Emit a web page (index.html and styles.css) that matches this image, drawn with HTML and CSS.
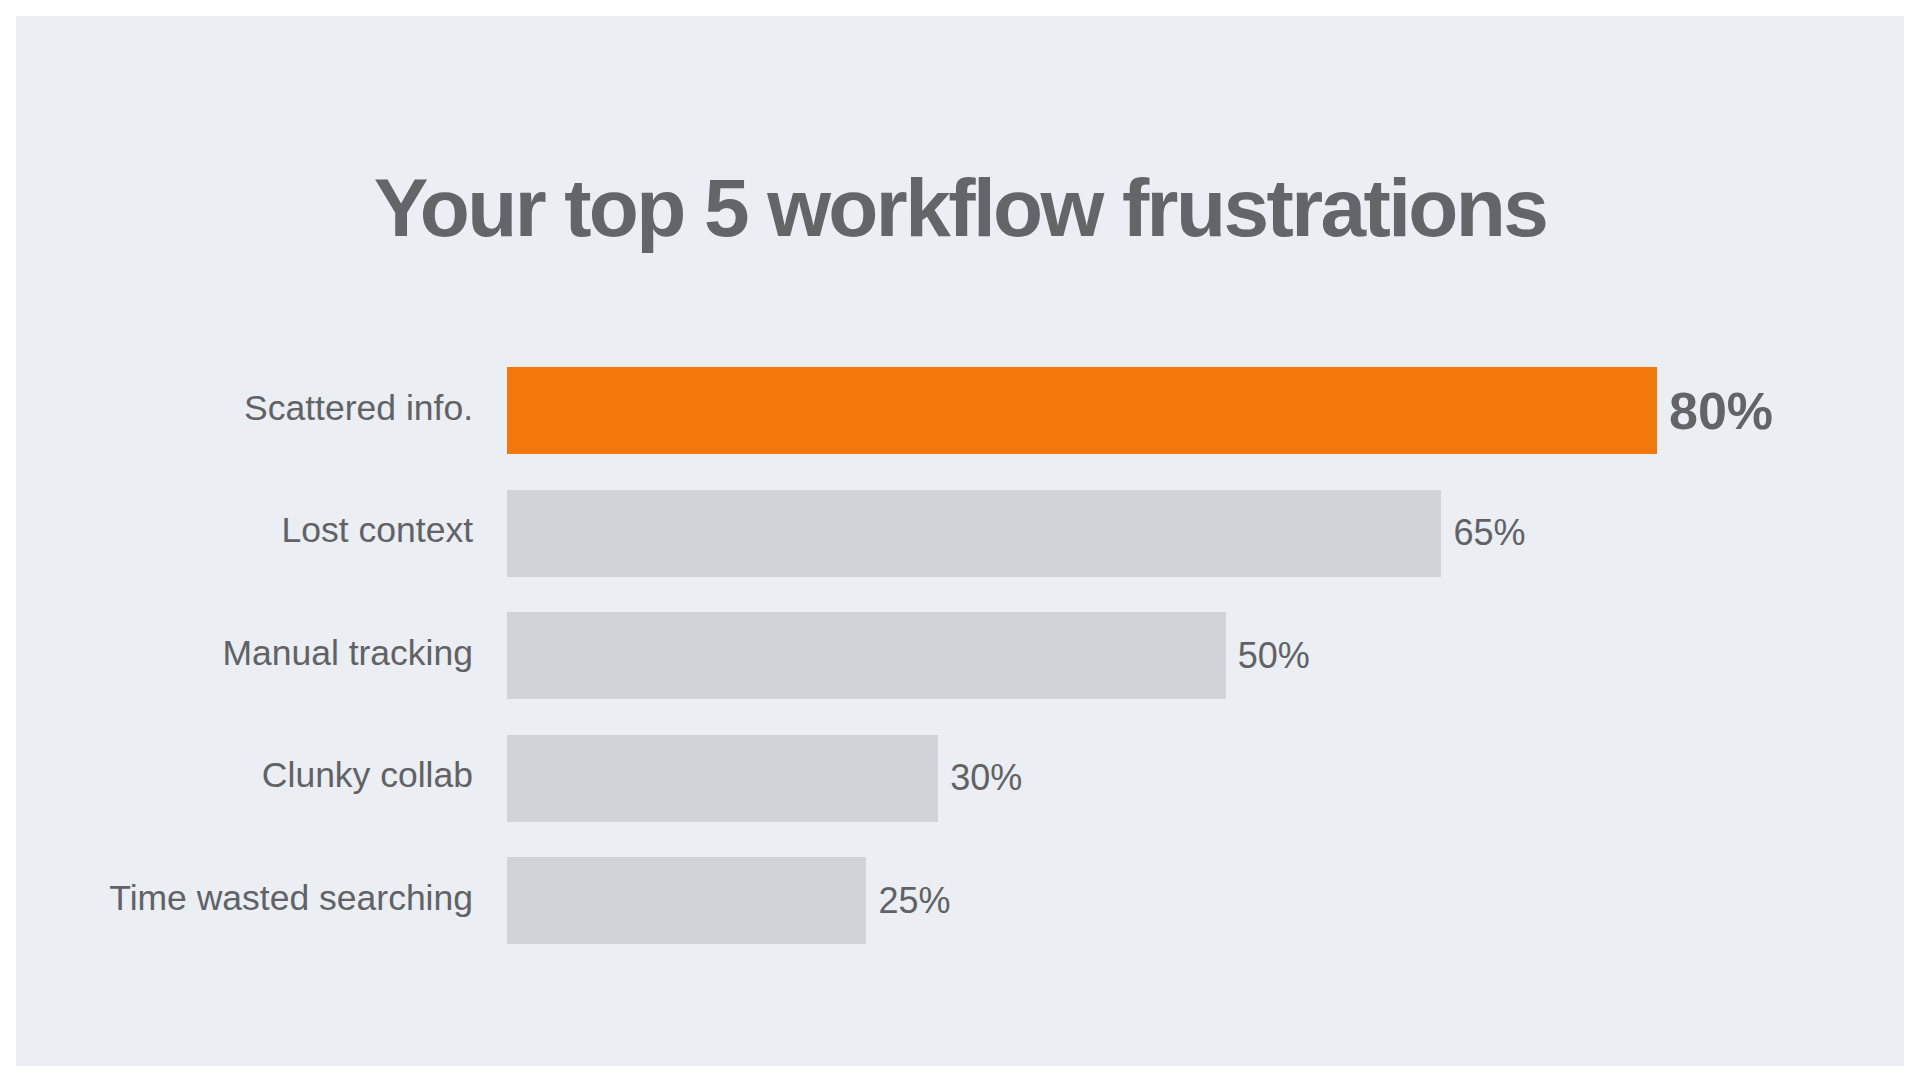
FILE: index.html
```html
<!DOCTYPE html>
<html lang="en">
<head>
<meta charset="utf-8">
<title>Your top 5 workflow frustrations</title>
<link rel="stylesheet" href="styles.css">
</head>
<body>
<main class="panel">
  <h1 class="title">Your top 5 workflow frustrations</h1>
  <section class="chart">
    <div class="row highlight">
      <span class="label">Scattered info.</span>
      <span class="bar" style="--v:80"></span>
      <span class="value">80%</span>
    </div>
    <div class="row">
      <span class="label">Lost context</span>
      <span class="bar" style="--v:65"></span>
      <span class="value">65%</span>
    </div>
    <div class="row">
      <span class="label">Manual tracking</span>
      <span class="bar" style="--v:50"></span>
      <span class="value">50%</span>
    </div>
    <div class="row">
      <span class="label">Clunky collab</span>
      <span class="bar" style="--v:30"></span>
      <span class="value">30%</span>
    </div>
    <div class="row">
      <span class="label">Time wasted searching</span>
      <span class="bar" style="--v:25"></span>
      <span class="value">25%</span>
    </div>
  </section>
</main>
</body>
</html>
```
FILE: styles.css
```css
html, body {
  margin: 0;
  padding: 0;
  background: #ffffff;
}

body {
  font-family: "Liberation Sans", Arial, sans-serif;
  color: #636468;
}

.panel {
  margin: 16px;
  height: 1050px;
  box-sizing: border-box;
  background: #ebeef3;
  padding-top: 151px;
  overflow: hidden;
}

.title {
  margin: 0;
  text-align: center;
  font-size: 82px;
  line-height: 82px;
  font-weight: 700;
  letter-spacing: -2.6px;
  color: #646569;
}

.chart {
  margin-top: 118px;
  display: flex;
  flex-direction: column;
  gap: 35.5px;
}

.row {
  display: flex;
  align-items: center;
  height: 87px;
}

.label {
  width: 457px;
  flex: none;
  text-align: right;
  font-size: 35.5px;
  color: #616266;
  margin-right: 34px;
  padding-bottom: 5px;
}

.bar {
  display: block;
  height: 87px;
  width: calc(var(--v) * 14.375px);
  background: #d0d3d8;
  flex: none;
}

.value {
  margin-left: 12px;
  font-size: 36px;
  color: #616266;
}

.highlight .bar {
  background: #f3770a;
}

.highlight .value {
  font-size: 52px;
  font-weight: 700;
  color: #636468;
}
```
